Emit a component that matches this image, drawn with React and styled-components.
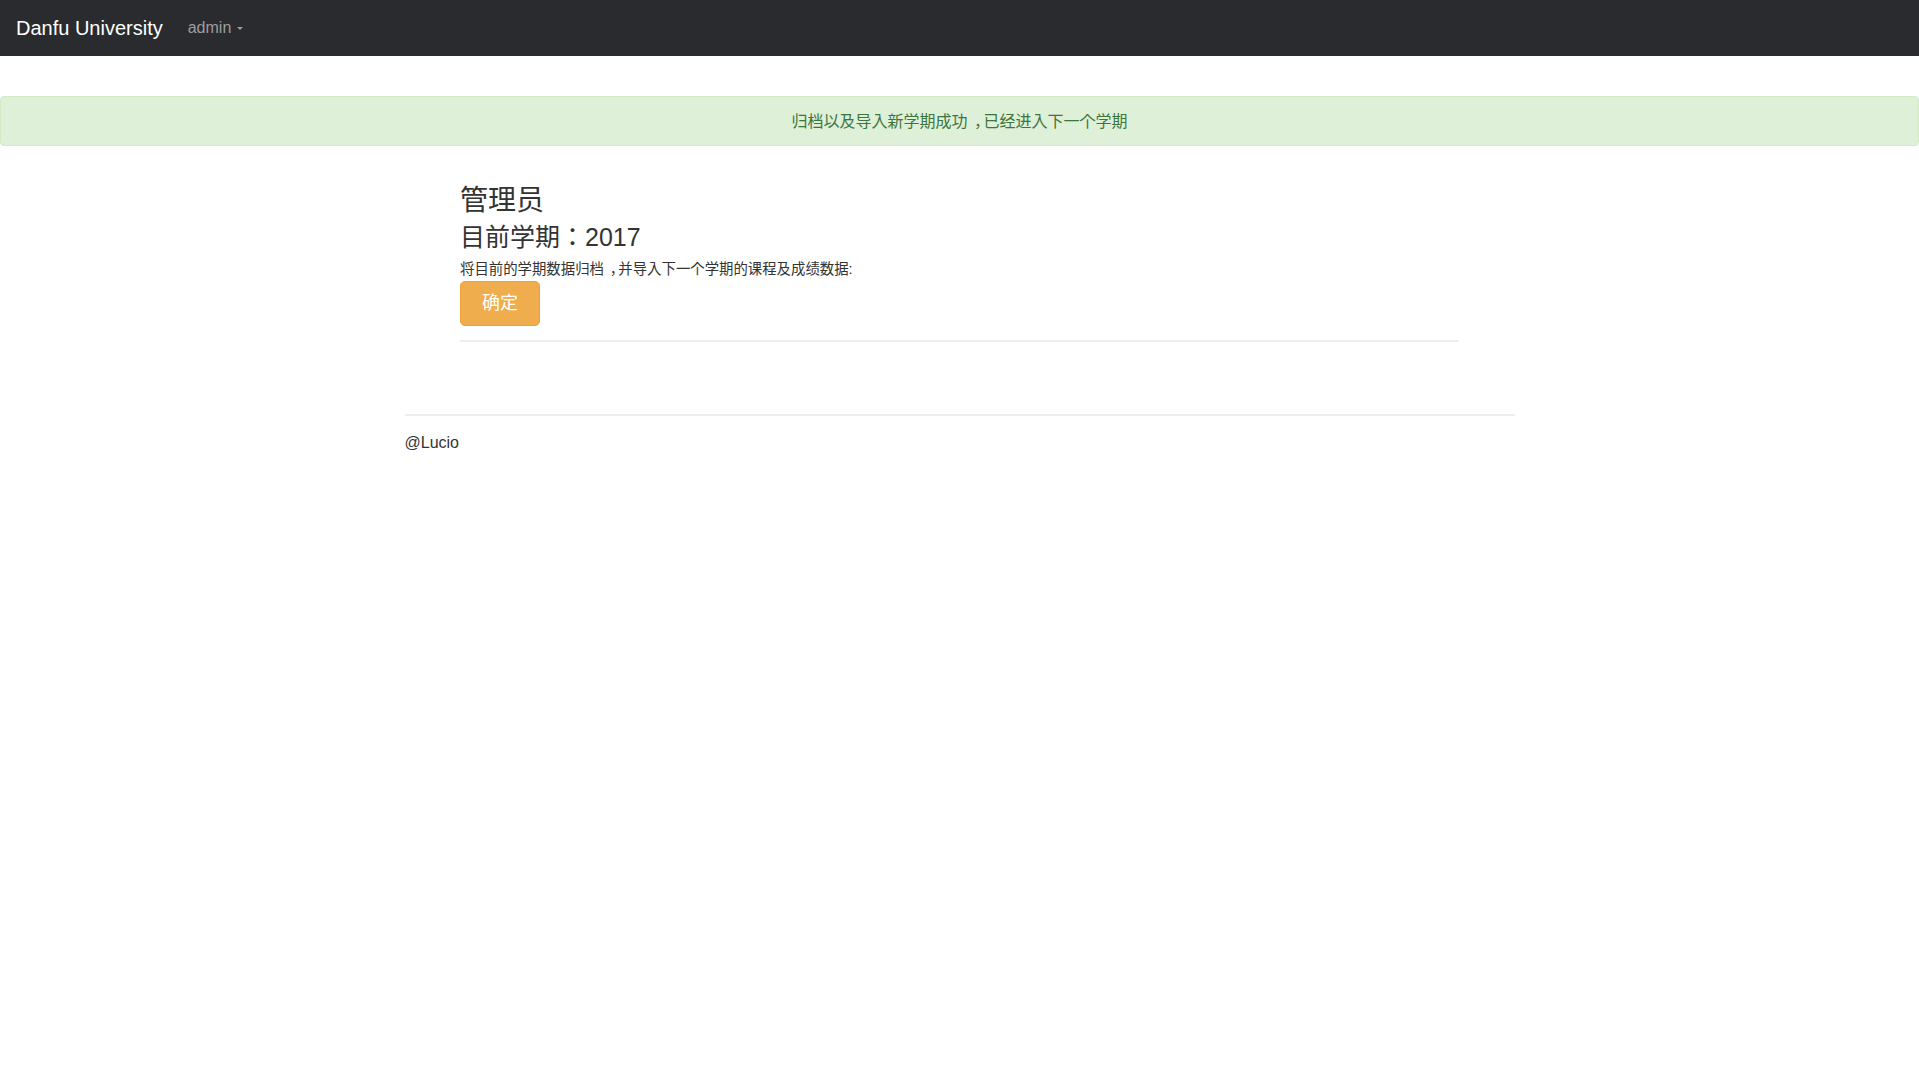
import React from "react";
import styled, { createGlobalStyle } from "styled-components";

const Global = createGlobalStyle`
  html, body { margin: 0; padding: 0; background: #fff; }
  body {
    font-family: "Liberation Sans", "Noto Sans CJK KR", Arial, sans-serif;
    color: #333;
    font-size: 16px;
  }
  * { box-sizing: border-box; }
`;

const Navbar = styled.nav`
  height: 56px;
  background: #2a2b2e;
  display: flex;
  align-items: center;
  padding-left: 16px;
  gap: 25px;
`;

const Brand = styled.a`
  font-size: 20px;
  color: #fff;
  text-decoration: none;
  line-height: 1;
  margin-top: -1px;
`;

const Dropdown = styled.a`
  font-size: 16px;
  color: #9d9d9d;
  text-decoration: none;
  display: flex;
  align-items: center;
  gap: 6px;
  margin-top: -1px;
`;

const Caret = styled.span`
  width: 0;
  height: 0;
  border-left: 3px solid transparent;
  border-right: 3px solid transparent;
  border-top: 3px solid #9d9d9d;
  margin-top: 2px;
`;

const Alert = styled.div`
  margin-top: 40px;
  height: 50px;
  background: #dff0d8;
  border: 1px solid #d6e9c6;
  border-radius: 4px;
  color: #3c763d;
  font-size: 16px;
  display: flex;
  align-items: center;
  justify-content: center;
  padding-bottom: 2px;
`;

/* full-width comma drawn centred in its cell, as in the reference */
const Comma = styled.span`
  padding-left: 0.4em;
  letter-spacing: -0.4em;
`;

const Content = styled.main`
  width: 999px;
  margin: 40px auto 0;
`;

const Title = styled.h2`
  margin: 0;
  font-size: 28px;
  font-weight: 400;
  line-height: 1.1;
  color: #333;
`;

const Term = styled.h3`
  margin: 7px 0 0;
  font-size: 25px;
  font-weight: 400;
  line-height: 1.1;
  color: #333;
`;

const Hint = styled.p`
  margin: 8px 0 0;
  font-size: 14.4px;
  line-height: 20px;
  color: #333;
`;

const WarnButton = styled.button`
  margin-top: 2px;
  font-family: inherit;
  font-size: 18px;
  line-height: 23px;
  padding: 10px 21px;
  color: #fff;
  background: #f0ad4e;
  border: 1px solid #eea236;
  border-radius: 5px;
  cursor: pointer;
`;

const Rule = styled.hr`
  margin: 14px 0 0;
  border: 0;
  border-top: 2px solid #eee;
`;

const Footer = styled.footer`
  width: 1110px;
  margin: 72px auto 0;
`;

const FooterRule = styled.hr`
  margin: 0;
  border: 0;
  border-top: 2px solid #eee;
`;

const Credit = styled.p`
  margin: 16px 0 0;
  font-size: 16px;
  line-height: 22px;
  color: #333;
`;

export default function App() {
  return (
    <>
      <Global />
      <Navbar>
        <Brand href="#">Danfu University</Brand>
        <Dropdown href="#">
          admin <Caret />
        </Dropdown>
      </Navbar>
      <Alert>
        归档以及导入新学期成功<Comma>，</Comma>已经进入下一个学期
      </Alert>
      <Content>
        <Title>管理员</Title>
        <Term>目前学期：2017</Term>
        <Hint>
          将目前的学期数据归档<Comma>，</Comma>并导入下一个学期的课程及成绩数据:
        </Hint>
        <WarnButton>确定</WarnButton>
        <Rule />
      </Content>
      <Footer>
        <FooterRule />
        <Credit>@Lucio</Credit>
      </Footer>
    </>
  );
}
